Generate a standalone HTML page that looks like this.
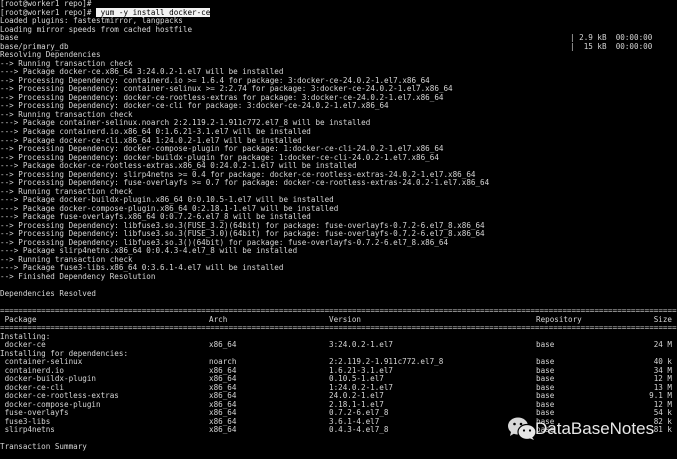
<!DOCTYPE html>
<html><head><meta charset="utf-8"><style>
html,body{margin:0;padding:0;background:#000;}
body{width:677px;height:459px;overflow:hidden;position:relative;}
pre{margin:0;position:absolute;left:0;top:0;width:677px;height:459px;overflow:hidden;font-family:"DejaVu Sans Mono","Liberation Mono",monospace;font-size:7.6px;line-height:8.53px;color:#d6d6d6;white-space:pre;}
.hl{background:#f2f2f2;color:#000;}
.r{position:relative;display:block;height:8.53px;width:677px;}
.r span{position:absolute;top:0;}
.a{left:209px}.v{left:329px}.p{left:536px}.s{right:5px;text-align:right}
.rt{position:absolute;left:570px;}
.wm{position:absolute;left:535px;top:419px;font-family:"Liberation Sans","DejaVu Sans",sans-serif;font-size:17px;color:#e8e8e8;}
</style></head><body>
<pre>[root@worker1 repo]#
[root@worker1 repo]# <span class="hl"> yum -y install docker-ce</span>
Loaded plugins: fastestmirror, langpacks
Loading mirror speeds from cached hostfile
base<span class="rt">| 2.9 kB  00:00:00</span>
base/primary_db<span class="rt">|  15 kB  00:00:00</span>
Resolving Dependencies
--> Running transaction check
---> Package docker-ce.x86_64 3:24.0.2-1.el7 will be installed
--> Processing Dependency: containerd.io >= 1.6.4 for package: 3:docker-ce-24.0.2-1.el7.x86_64
--> Processing Dependency: container-selinux >= 2:2.74 for package: 3:docker-ce-24.0.2-1.el7.x86_64
--> Processing Dependency: docker-ce-rootless-extras for package: 3:docker-ce-24.0.2-1.el7.x86_64
--> Processing Dependency: docker-ce-cli for package: 3:docker-ce-24.0.2-1.el7.x86_64
--> Running transaction check
---> Package container-selinux.noarch 2:2.119.2-1.911c772.el7_8 will be installed
---> Package containerd.io.x86_64 0:1.6.21-3.1.el7 will be installed
---> Package docker-ce-cli.x86_64 1:24.0.2-1.el7 will be installed
--> Processing Dependency: docker-compose-plugin for package: 1:docker-ce-cli-24.0.2-1.el7.x86_64
--> Processing Dependency: docker-buildx-plugin for package: 1:docker-ce-cli-24.0.2-1.el7.x86_64
---> Package docker-ce-rootless-extras.x86_64 0:24.0.2-1.el7 will be installed
--> Processing Dependency: slirp4netns >= 0.4 for package: docker-ce-rootless-extras-24.0.2-1.el7.x86_64
--> Processing Dependency: fuse-overlayfs >= 0.7 for package: docker-ce-rootless-extras-24.0.2-1.el7.x86_64
--> Running transaction check
---> Package docker-buildx-plugin.x86_64 0:0.10.5-1.el7 will be installed
---> Package docker-compose-plugin.x86_64 0:2.18.1-1.el7 will be installed
---> Package fuse-overlayfs.x86_64 0:0.7.2-6.el7_8 will be installed
--> Processing Dependency: libfuse3.so.3(FUSE_3.2)(64bit) for package: fuse-overlayfs-0.7.2-6.el7_8.x86_64
--> Processing Dependency: libfuse3.so.3(FUSE_3.0)(64bit) for package: fuse-overlayfs-0.7.2-6.el7_8.x86_64
--> Processing Dependency: libfuse3.so.3()(64bit) for package: fuse-overlayfs-0.7.2-6.el7_8.x86_64
---> Package slirp4netns.x86_64 0:0.4.3-4.el7_8 will be installed
--> Running transaction check
---> Package fuse3-libs.x86_64 0:3.6.1-4.el7 will be installed
--> Finished Dependency Resolution

Dependencies Resolved

===========================================================================================================================================================
<span class="r"><span> Package</span><span class="a">Arch</span><span class="v">Version</span><span class="p">Repository</span><span class="s">Size</span></span>===========================================================================================================================================================
Installing:
<span class="r"><span> docker-ce</span><span class="a">x86_64</span><span class="v">3:24.0.2-1.el7</span><span class="p">base</span><span class="s">24 M</span></span>Installing for dependencies:
<span class="r"><span> container-selinux</span><span class="a">noarch</span><span class="v">2:2.119.2-1.911c772.el7_8</span><span class="p">base</span><span class="s">40 k</span></span><span class="r"><span> containerd.io</span><span class="a">x86_64</span><span class="v">1.6.21-3.1.el7</span><span class="p">base</span><span class="s">34 M</span></span><span class="r"><span> docker-buildx-plugin</span><span class="a">x86_64</span><span class="v">0.10.5-1.el7</span><span class="p">base</span><span class="s">12 M</span></span><span class="r"><span> docker-ce-cli</span><span class="a">x86_64</span><span class="v">1:24.0.2-1.el7</span><span class="p">base</span><span class="s">13 M</span></span><span class="r"><span> docker-ce-rootless-extras</span><span class="a">x86_64</span><span class="v">24.0.2-1.el7</span><span class="p">base</span><span class="s">9.1 M</span></span><span class="r"><span> docker-compose-plugin</span><span class="a">x86_64</span><span class="v">2.18.1-1.el7</span><span class="p">base</span><span class="s">12 M</span></span><span class="r"><span> fuse-overlayfs</span><span class="a">x86_64</span><span class="v">0.7.2-6.el7_8</span><span class="p">base</span><span class="s">54 k</span></span><span class="r"><span> fuse3-libs</span><span class="a">x86_64</span><span class="v">3.6.1-4.el7</span><span class="p">base</span><span class="s">82 k</span></span><span class="r"><span> slirp4netns</span><span class="a">x86_64</span><span class="v">0.4.3-4.el7_8</span><span class="p">base</span><span class="s">81 k</span></span>
Transaction Summary</pre>
<svg style="position:absolute;left:507px;top:417px" width="30" height="24" viewBox="0 0 30 24">
<ellipse cx="11" cy="9" rx="10" ry="8.5" fill="#d8d8d8"/>
<path d="M4 15 L3 19 L8 16 Z" fill="#d8d8d8"/>
<ellipse cx="20" cy="15" rx="9" ry="7.5" fill="#e6e6e6" stroke="#000" stroke-width="1.2"/>
<path d="M25 20 L27 23 L22 21 Z" fill="#e6e6e6"/>
<circle cx="7.5" cy="7" r="1.3" fill="#000"/><circle cx="14" cy="7" r="1.3" fill="#000"/>
<circle cx="17" cy="13.5" r="1.1" fill="#000"/><circle cx="23" cy="13.5" r="1.1" fill="#000"/>
</svg>
<div class="wm">DataBaseNotes</div>
</body></html>
